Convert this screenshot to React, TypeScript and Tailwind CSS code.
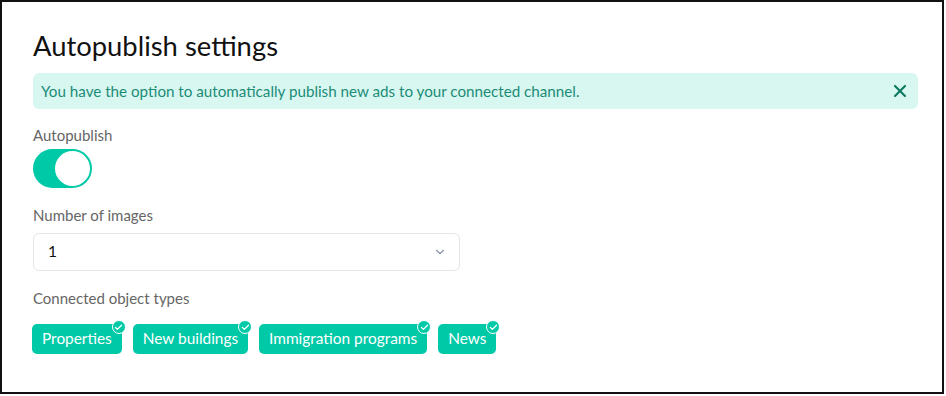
import { ChevronDown, X, Check } from "lucide-react";

const types = ["Properties", "New buildings", "Immigration programs", "News"];

const Chip = ({ label }: { label: string }) => (
  <div className="relative flex h-[30px] items-center rounded-[5px] bg-[#00c9a7] px-[10px] text-[15.4px] text-white">
    {label}
    <span className="absolute -right-[4px] -top-[4px] flex h-[14px] w-[14px] items-center justify-center rounded-full border border-white bg-[#00c9a7]">
      <Check size={9} strokeWidth={3.5} className="text-white" />
    </span>
  </div>
);

export default function App() {
  return (
    <div
      className="h-[394px] w-[944px] border-2 border-[#111] bg-white px-[30px] pt-[26px]"
      style={{ fontFamily: "Lato, 'Noto Sans', sans-serif" }}
    >
      <div className="pl-[1px]">
        <h1 className="text-[27.4px] leading-[36px] text-[#111]">Autopublish settings</h1>

        <div className="mt-[9px] flex h-[36px] w-[885px] items-center justify-between rounded-[6px] bg-[#d9f7f1] pl-[8px] pr-[8px]">
          <span className="text-[15.2px] text-[#1b8c78]">
            You have the option to automatically publish new ads to your connected channel.
          </span>
          <X size={20} strokeWidth={2.6} className="text-[#0e7a62]" />
        </div>

        <div className="mt-[16px] text-[15px] leading-[20px] text-[#666]">Autopublish</div>
        <div className="mt-[4px] flex h-[39px] w-[59px] items-center justify-end rounded-full bg-[#00c9a7] pr-[2px]">
          <div className="h-[35px] w-[35px] rounded-full bg-white" />
        </div>

        <div className="mt-[17px] text-[15px] leading-[20px] text-[#666]">Number of images</div>
        <div className="mt-[8px] flex h-[38px] w-[427px] items-center justify-between rounded-[6px] border border-[#e3e5ea] pl-[14px] pr-[12px]">
          <span className="text-[15.5px] text-[#111]">1</span>
          <ChevronDown size={14} className="text-[#8a94a6]" />
        </div>

        <div className="mt-[17px] text-[15px] leading-[20px] text-[#666]">Connected object types</div>
      </div>
      <div className="mt-[16px] flex gap-[11px]">
        {types.map((t) => (
          <Chip key={t} label={t} />
        ))}
      </div>
    </div>
  );
}
